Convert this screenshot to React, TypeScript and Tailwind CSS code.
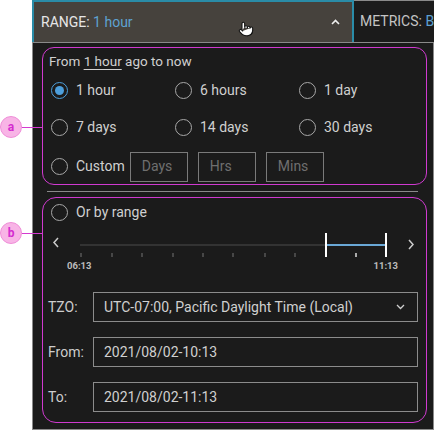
import { Pointer } from 'lucide-react'

const font = { fontFamily: 'Roboto, "Liberation Sans", sans-serif' }

function Radio({ checked, label }: { checked?: boolean; label: string }) {
  return (
    <div className="flex items-center gap-[8px]">
      <span
        className={
          checked
            ? 'w-[17px] h-[17px] rounded-full border-[1.5px] border-[#4d9fdc] flex items-center justify-center'
            : 'w-[17px] h-[17px] rounded-full border-[1.5px] border-[#a8a8a8]'
        }
      >
        {checked && <span className="w-[9px] h-[9px] rounded-full bg-[#4d9fdc]" />}
      </span>
      <span className="text-[14px] text-[#d0d0d0]">{label}</span>
    </div>
  )
}

function Bubble({ letter, top }: { letter: string; top: string }) {
  return (
    <div className={`absolute left-0 ${top} flex items-center`}>
      <span className="w-[22px] h-[22px] rounded-full bg-[#f8b4e6] border border-[#ef8ed8] flex items-center justify-center text-[12px] font-bold text-[#d42ccf] leading-none">
        {letter}
      </span>
      <span className="w-[20px] h-px bg-[#d43ad0]" />
    </div>
  )
}

function Field({ label, value, select }: { label: string; value: string; select?: boolean }) {
  return (
    <div className="flex items-center h-[30px]">
      <span className="w-[50px] pl-[5px] text-[14px] text-[#cdcdcd]">{label}</span>
      <div className="flex-1 h-[30px] border border-[#8c8c8c] flex items-center justify-between pl-[10px] pr-[12px]">
        <span className="text-[14px] text-[#d0d0d0]">{value}</span>
        {select && (
          <svg width="9" height="6" viewBox="0 0 9 6">
            <polyline points="1,1 4.5,4.5 8,1" fill="none" stroke="#cfcfcf" strokeWidth="1.3" />
          </svg>
        )}
      </div>
    </div>
  )
}

export default function App() {
  const ticks = [38, 69, 99, 130, 160, 190, 222, 252]

  return (
    <div className="relative w-[434px] h-[430px] bg-white flex overflow-hidden" style={font}>
      <div className="w-[32px] shrink-0" />

      <div className="flex-1 flex flex-col min-w-0">
        {/* Tabs */}
        <div className="flex h-[43px] border-b border-[#8a8a8a] shrink-0">
          <div className="w-[322px] bg-[#46423d] border-2 border-b-0 border-[#2a8ca8] flex items-center justify-between pl-[7px] pr-[12px]">
            <span className="text-[14px] text-[#e6e6e6]">
              RANGE: <span className="text-[#5ea2d2]">1 hour</span>
            </span>
            <svg width="9" height="6" viewBox="0 0 9 6">
              <polyline points="1,5 4.5,1.5 8,5" fill="none" stroke="#f0f0f0" strokeWidth="1.6" />
            </svg>
          </div>
          <div className="flex-1 bg-[#1b1b1b] border-t border-[#8a8a8a] flex items-center pl-[6px] overflow-hidden whitespace-nowrap">
            <span className="text-[14px] text-[#c4c4c4]">
              METRICS: <span className="text-[#5ea2d2]">B</span>
            </span>
          </div>
        </div>

        {/* Body */}
        <div className="flex-1 bg-[#1b1b1b] border-l border-r border-b border-[#8a8a8a] pl-[9px] pr-[6px] pt-[4px]">
          {/* Section a */}
          <div className="h-[138px] border border-[#d03ad0] rounded-[12px] pl-[8px] pt-[5px]">
            <div className="h-[16px] flex items-center text-[13.5px] text-[#d0d0d0] -ml-[2px]">
              From&nbsp;<span className="underline underline-offset-[3px]">1 hour</span>&nbsp;ago to now
            </div>
            <div className="mt-[6px] h-[30px] grid grid-cols-[124px_124px_124px] items-center">
              <Radio checked label="1 hour" />
              <Radio label="6 hours" />
              <Radio label="1 day" />
            </div>
            <div className="mt-[7px] h-[30px] grid grid-cols-[124px_124px_124px] items-center">
              <Radio label="7 days" />
              <Radio label="14 days" />
              <Radio label="30 days" />
            </div>
            <div className="mt-[9px] h-[31px] flex items-center">
              <Radio label="Custom" />
              <div className="ml-[5px] flex gap-[10px]">
                {['Days', 'Hrs', 'Mins'].map(p => (
                  <div
                    key={p}
                    className="w-[58px] h-[30px] border border-[#7a7a7a] flex items-center pl-[11px] text-[14px] text-[#6f6f6f]"
                  >
                    {p}
                  </div>
                ))}
              </div>
            </div>
          </div>

          <div className="mt-[6px] ml-[5px] mr-[9px] h-px bg-[#8a8a8a]" />

          {/* Section b */}
          <div className="mt-[5px] h-[226px] border border-[#d03ad0] rounded-[14px] pt-[4px]">
            <div className="h-[20px] flex items-center pl-[8px]">
              <Radio label="Or by range" />
            </div>
            <svg className="mt-[6px] block" width="383" height="32" viewBox="0 0 383 32">
              <polyline points="15,10 11,14.5 15,19" fill="none" stroke="#cccccc" strokeWidth="1.5" />
              <line x1="37" x2="283" y1="17" y2="17" stroke="#333333" strokeWidth="2" />
              <line x1="283" x2="343" y1="17" y2="17" stroke="#6aa8d6" strokeWidth="2" />
              {ticks.map(x => (
                <line key={x} x1={x} x2={x} y1="25" y2="29" stroke="#575757" strokeWidth="1.5" />
              ))}
              <line x1="313" x2="313" y1="25" y2="29" stroke="#dddddd" strokeWidth="1.5" />
              <line x1="283" x2="283" y1="5" y2="29" stroke="#ffffff" strokeWidth="2" />
              <line x1="343" x2="343" y1="5" y2="29" stroke="#ffffff" strokeWidth="2" />
              <polyline points="366,12 370,16.5 366,21" fill="none" stroke="#cccccc" strokeWidth="1.5" />
            </svg>
            <div className="flex justify-between pl-[24px] pr-[28px] h-[12px] items-center text-[9.5px] font-bold text-[#bcbcbc]">
              <span>06:13</span>
              <span>11:13</span>
            </div>
            <div className="mt-[20px] pr-[8px] flex flex-col gap-[15px]">
              <Field label="TZO:" value="UTC-07:00, Pacific Daylight Time (Local)" select />
              <Field label="From:" value="2021/08/02-10:13" />
              <Field label="To:" value="2021/08/02-11:13" />
            </div>
          </div>
        </div>
      </div>

      <Bubble letter="a" top="top-[116px]" />
      <Bubble letter="b" top="top-[222px]" />

      <div className="absolute left-[238px] top-[21px]">
        <Pointer size={16} fill="#ffffff" stroke="#111111" strokeWidth={1.6} />
      </div>
    </div>
  )
}
